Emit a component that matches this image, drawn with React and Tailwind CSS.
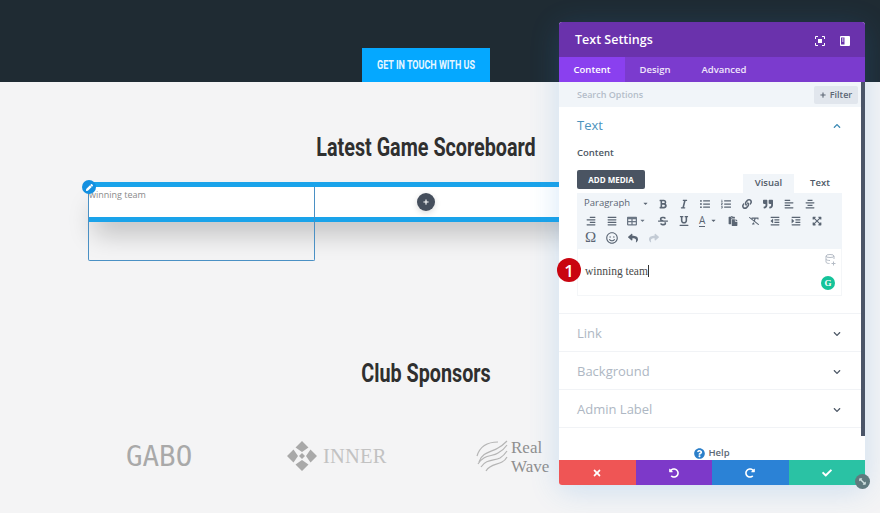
import {
  FaAlignCenter, FaAlignJustify, FaAlignLeft, FaAlignRight, FaBold, FaCheck, FaChevronDown, FaChevronUp,
  FaExpandArrowsAlt, FaIndent, FaItalic, FaLink, FaListOl, FaListUl, FaOutdent, FaPaste, FaPen, FaPlus,
  FaQuestionCircle, FaQuoteRight, FaRedoAlt, FaRegSmile, FaRemoveFormat, FaReply, FaShare, FaStrikethrough,
  FaTable, FaTimes, FaUndoAlt, FaUnderline, FaCaretDown, FaArrowsAltH,
} from 'react-icons/fa';

const display = "font-['Roboto',sans-serif]";

function ToolIcon({ icon: Icon, size = 10 }) {
  return (
    <span className="flex h-[17px] w-[21px] shrink-0 items-center justify-center text-[#5a6573]">
      <Icon size={size} />
    </span>
  );
}

function Toolbar() {
  return (
    <div className="flex h-[56px] flex-col bg-[#f1f5f9] px-[3px] pt-[2px]">
      <div className="flex items-center">
        <span className="flex w-[72px] items-center justify-between pl-1 pr-[3px] text-[9.5px] text-[#5a6573]">
          Paragraph
          <FaCaretDown size={7} />
        </span>
        <ToolIcon icon={FaBold} />
        <ToolIcon icon={FaItalic} />
        <ToolIcon icon={FaListUl} />
        <ToolIcon icon={FaListOl} />
        <ToolIcon icon={FaLink} />
        <ToolIcon icon={FaQuoteRight} />
        <ToolIcon icon={FaAlignLeft} />
        <ToolIcon icon={FaAlignCenter} />
      </div>
      <div className="flex items-center">
        <ToolIcon icon={FaAlignRight} />
        <ToolIcon icon={FaAlignJustify} />
        <span className="flex h-[17px] w-[30px] items-center gap-[2px] pl-[5px] text-[#6b7684]">
          <FaTable size={10} />
          <FaCaretDown size={7} />
        </span>
        <ToolIcon icon={FaStrikethrough} />
        <ToolIcon icon={FaUnderline} />
        <span className="flex h-[17px] w-[28px] items-center gap-[5px] pl-[5px] text-[#5a6573]">
          <span className="border-b border-[#5a6573] text-[10px] leading-[12px]">A</span>
          <FaCaretDown size={7} />
        </span>
        <ToolIcon icon={FaPaste} />
        <ToolIcon icon={FaRemoveFormat} />
        <ToolIcon icon={FaOutdent} />
        <ToolIcon icon={FaIndent} />
        <ToolIcon icon={FaExpandArrowsAlt} />
      </div>
      <div className="flex items-center">
        <span className="flex h-[17px] w-[21px] items-center justify-center font-['Liberation_Serif',serif] text-[15px] text-[#5a6573]">Ω</span>
        <ToolIcon icon={FaRegSmile} size={12} />
        <ToolIcon icon={FaReply} />
        <span className="flex h-[17px] w-[21px] items-center justify-center text-[#c3cbd5]">
          <FaShare size={10} />
        </span>
      </div>
    </div>
  );
}

function CollapsedRow({ label }) {
  return (
    <div className="flex h-[38px] items-center justify-between border-b border-[#f1f3f6] pl-[18px] pr-[24px] pt-[2px]">
      <span className="text-[13px] text-[#aeb7c3]">{label}</span>
      <FaChevronDown size={8} className="text-[#4f5a68]" />
    </div>
  );
}

function SettingsPanel() {
  return (
    <div className="absolute left-[559px] top-[22px] flex h-[463px] w-[306px] flex-col rounded-[3px] bg-white font-['Open_Sans',sans-serif] shadow-[0_5px_30px_rgba(43,135,218,0.2)]">
      <div className="flex h-[35px] items-center justify-between rounded-t-[3px] bg-[#6a32ac] pl-4 pr-[15px] pt-[2px]">
        <span className="text-[12.5px] font-semibold text-white">Text Settings</span>
        <div className="flex items-center gap-[15px] text-white">
          <svg width="10" height="10" viewBox="0 0 10 10" fill="none" stroke="currentColor">
            <path d="M.5 3V.5H3M7 .5h2.500V3M9.500 7v2.500H7M3 9.500H.5V7" />
            <rect x="3" y="3" width="4" height="4" fill="currentColor" stroke="none" />
          </svg>
          <svg width="10" height="10" viewBox="0 0 10 10">
            <path fill="currentColor" d="M1 0h8a1 1 0 0 1 1 1v8a1 1 0 0 1-1 1H1a1 1 0 0 1-1-1V1a1 1 0 0 1 1-1zm0 1.500v7h3.500v-7zm1 1h1.500v1H2zm0 2h1.500v1H2z" />
          </svg>
        </div>
      </div>
      <div className="flex h-[25px] bg-[#7b3bce] text-[9.5px] font-semibold text-white">
        <span className="flex w-[66px] items-center justify-center bg-[#8a40ef] pt-[1px]">Content</span>
        <span className="flex w-[60px] items-center justify-center pt-[1px] text-[#f0e6fb]">Design</span>
        <span className="flex w-[78px] items-center justify-center pt-[1px] text-[#f0e6fb]">Advanced</span>
      </div>
      <div className="flex h-[25px] items-center justify-between bg-[#f1f5f9] pl-[18px] pr-[7px]">
        <span className="text-[9px] font-semibold text-[#b4bdc9]">Search Options</span>
        <span className="flex h-[18px] w-[44px] items-center justify-center gap-1 rounded-[2px] bg-[#e1e6ed] text-[9px] font-semibold text-[#5c6775]">
          <FaPlus size={6} />
          Filter
        </span>
      </div>

      <div className="h-[207px] border-b border-[#f1f3f6] pl-[18px] pr-[23px]">
        <div className="flex h-[38px] items-center justify-between pr-[1px]">
          <span className="text-[13px] text-[#4c93bd]">Text</span>
          <FaChevronUp size={8} className="text-[#3e8bb5]" />
        </div>
        <p className="mt-[1px] text-[9.5px] font-semibold leading-[14px] text-[#4d5763]">Content</p>
        <div className="mt-[10px] flex items-start justify-between">
          <span className="flex h-[19px] w-[68px] items-center justify-center rounded-[2px] bg-[#4a5462] text-[8px] font-bold text-white">ADD MEDIA</span>
          <div className="mt-[4px] flex gap-[4px] text-[9.5px] font-semibold text-[#4f5a68]">
            <span className="flex h-[19px] w-[51px] items-center justify-center bg-[#f1f5f9]">Visual</span>
            <span className="flex h-[19px] w-[44px] items-center justify-center bg-white">Text</span>
          </div>
        </div>
        <Toolbar />
        <div className="relative h-[47px] border-x border-b border-[#f4f6f8] pl-[7px] pt-[13px] font-['Liberation_Serif',serif] text-[11.5px] leading-[18px] text-[#4a4a4a]">
          <span className="border-r border-[#333] pr-[0.5px]">winning team</span>
          <svg className="absolute right-[5px] top-[5px] text-[#b5bcc6]" width="11" height="12" viewBox="0 0 11 12" fill="none" stroke="currentColor">
            <ellipse cx="5" cy="2" rx="4" ry="1.500" />
            <path d="M1 2v6c0 1 2 1.500 3.500 1.500M9 2v3M1 5c0 1 2 1.500 4 1.500M8.500 7.500v4M6.500 9.500h4" />
          </svg>
          <span className="absolute right-[6px] top-[27px] flex h-[14px] w-[14px] items-center justify-center rounded-full bg-[#15c39a] text-[9px] font-bold leading-none text-white">G</span>
        </div>
      </div>

      <CollapsedRow label="Link" />
      <CollapsedRow label="Background" />
      <CollapsedRow label="Admin Label" />

      <div className="flex flex-1 items-end justify-center pb-[1px]">
        <span className="flex items-center gap-[3px] text-[9.5px] font-semibold leading-[12px] text-[#5c6775]">
          <FaQuestionCircle size={11} className="text-[#2b7fc9]" />
          Help
        </span>
      </div>

      <div className="grid h-[25px] grid-cols-4 overflow-hidden rounded-b-[3px] text-white">
        <span className="flex items-center justify-center bg-[#ef5555]"><FaTimes size={10} /></span>
        <span className="flex items-center justify-center bg-[#7d39c9]"><FaUndoAlt size={10} /></span>
        <span className="flex items-center justify-center bg-[#2b82d6]"><FaRedoAlt size={10} /></span>
        <span className="flex items-center justify-center bg-[#2ac2a4]"><FaCheck size={10} /></span>
      </div>

      {/* scrollbar and resize handle sit over the panel */}
      <div className="absolute right-0 top-[60px] h-[354px] w-[4px] bg-[#4a5568]" />
      <span className="absolute right-[-5px] bottom-[-4px] flex h-[15px] w-[15px] items-center justify-center rounded-full bg-[#5f7a7e] text-[#cfe0df]">
        <FaArrowsAltH size={9} className="rotate-45" />
      </span>
      <span className="absolute left-[-2px] top-[236px] flex h-[24px] w-[24px] items-center justify-center rounded-full bg-[#c90510] text-[17px] font-semibold leading-none text-white">1</span>
    </div>
  );
}

function Logos() {
  return (
    <div className="mt-[41px] flex items-center pl-[126px] text-[#a9a9a9]">
      <span className="w-[66px] font-['DejaVu_Sans_Mono',monospace] text-[27.500px] leading-[52px]">GABO</span>
      <div className="ml-[95px] flex w-[99px] items-center gap-[6px]">
        <svg className="shrink-0" width="30" height="30" viewBox="0 0 30 30" fill="currentColor">
          <path d="M15 0l6.500 6.500L15 11 8.500 6.500zM6.500 8.500L11 15l-4.500 6.500L0 15zM23.500 8.500L30 15l-6.500 6.500L19 15zM15 19l6.500 4.500L15 30l-6.500-6.500z" />
          <path d="M15 12l3 3-3 3-3-3z" />
        </svg>
        <span className="font-['Liberation_Serif',serif] text-[20.500px] leading-none tracking-[0.2px] text-[#c2c2c2]">INNER</span>
      </div>
      <div className="ml-[90px] flex items-center gap-[3px]">
        <svg className="shrink-0" width="32" height="32" viewBox="0 0 32 32" fill="none" stroke="#b5b5b5" strokeWidth="1.200">
          <path d="M1 16C4 6 12 2 22 2M3 22C6 12 16 12 22 8c4-2 7-5 9-7" />
          <path d="M2 24c6-10 14-7 20-11 4-2 7-5 9-8" />
          <path d="M5 27c5-8 13-6 19-9 3-2 5-4 7-7" />
          <path d="M10 31c4-7 11-6 16-9 2-1 4-3 5-5" />
        </svg>
        <span className="mt-[2px] font-['Liberation_Serif',serif] text-[17px] leading-[19px] text-[#8f8f8f]">Real<br />Wave</span>
      </div>
    </div>
  );
}

export default function App() {
  return (
    <div className="relative h-[513px] w-[880px] overflow-hidden bg-[#f4f4f5]">
      <div className="flex h-[82px] items-end justify-center bg-[#1f2b33] pr-[28px]">
        <span className="flex h-[34px] w-[128px] items-center justify-center bg-[#05a8ff]">
          <span className={`scale-x-[0.72] whitespace-nowrap text-[12.500px] font-bold text-[#e6f6ff] ${display}`}>
            GET IN TOUCH WITH US
          </span>
        </span>
      </div>

      <div className="w-[852px]">
        <h1 className={`mt-[49px] scale-x-[0.76] text-center text-[26px] font-bold leading-[32px] text-[#2f2f2f] ${display}`}>
          Latest Game Scoreboard
        </h1>

        <div className="relative mx-[88px] mt-[19px] h-[79px] font-['Open_Sans',sans-serif]">
          <div className="h-[40px] border-y-[5px] border-[#1aa3ea] bg-white shadow-[0_18px_26px_-6px_rgba(0,0,0,0.22)]" />
          <div className="absolute left-0 top-[5px] h-[74px] w-[227px] rounded-b-[2px] border-x-[1.500px] border-b-[1.500px] border-[#4a90c4] pt-[1px] text-[9px] leading-[13px] text-[#8a8a8a]">
            winning team
          </div>
          <span className="absolute left-[-6px] top-[-2px] flex h-[14px] w-[14px] items-center justify-center rounded-full bg-[#1490e0] text-white">
            <FaPen size={7} />
          </span>
          <span className="absolute left-[329px] top-[11px] flex h-[18px] w-[18px] items-center justify-center rounded-full bg-[#454e5c] text-white shadow-[0_2px_6px_rgba(0,0,0,0.15)]">
            <FaPlus size={6} />
          </span>
        </div>

        <h2 className={`mt-[96px] scale-x-[0.76] text-center text-[26px] font-bold leading-[32px] text-[#2f2f2f] ${display}`}>
          Club Sponsors
        </h2>
      </div>

      <Logos />
      <SettingsPanel />
    </div>
  );
}
